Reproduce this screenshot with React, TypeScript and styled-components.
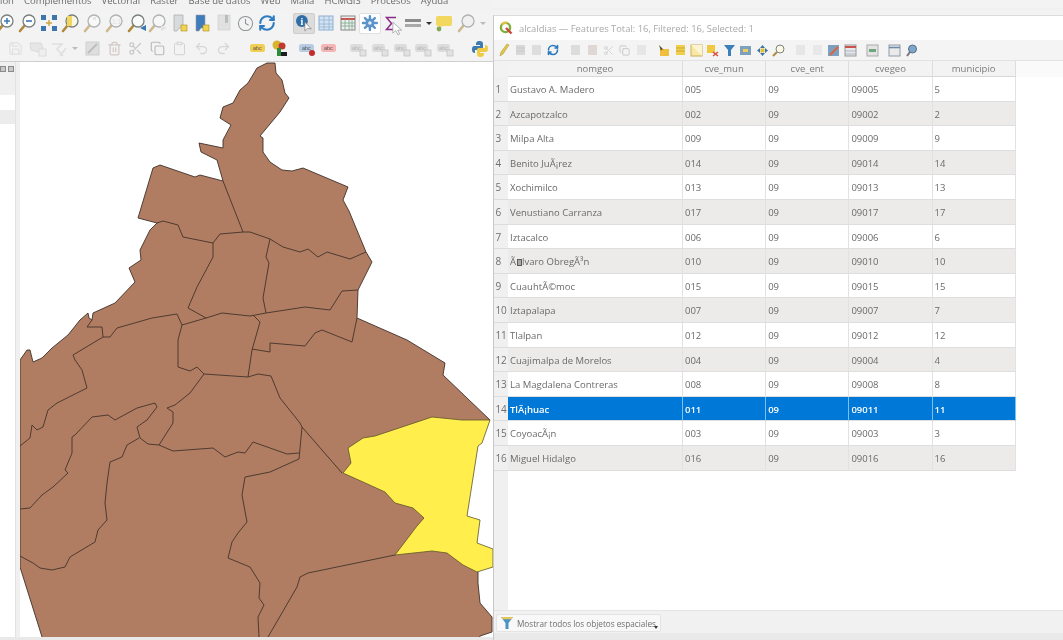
import styled, { createGlobalStyle } from "styled-components";
import { Fragment, ReactNode } from "react";
import {
  Clipboard,
  Clock,
  Copy,
  Redo2,
  RefreshCw,
  Save,
  Scissors,
  Trash2,
  Undo2,
} from "lucide-react";

const GlobalStyle = createGlobalStyle`
  html, body {
    margin: 0;
    padding: 0;
    background: #f2f2f2;
  }
  #root {
    width: 1063px;
    height: 640px;
    overflow: hidden;
  }
`;

// map geometry, in page pixels
const OUTLINE =
  "267,63 275,63 276,73 282,80 285,93 289,98 280,112 260,136 263,138 263,152 270,162 282,170 292,171 303,168 348,187 343,200 349,211 366,252 372,262 358,290 357,318 407,340 445,363 443,375 467,398 490,420 440,440 440,545 470,560 478,572 478,583 480,603 492,617 492,632 480,636 478,640 43,640 20,567 20,360 27,350 30,350 33,362 42,358 52,348 68,335 80,320 88,313 89,318 92,320 93,313 115,303 135,282 129,268 141,260 140,250 150,230 157,223 138,218 153,168 160,165 195,177 200,175 223,181 217,160 201,152 199,143 223,148 223,140 231,125 220,118 223,107 233,103 240,90 248,83 257,68";

const SELECTED =
  "490,420 482,443 478,446 467,516 480,520 477,543 493,549 493,567 477,572 463,565 447,553 432,551 395,555 417,526 424,518 413,508 395,503 385,492 363,482 343,473 351,463 348,448 363,438 375,436 432,417 462,420";

const BORDERS = [
  "223,181 243,232 250,232 270,239 283,247 300,252 308,249 318,257 327,252 350,259 366,252",
  "157,223 163,221 178,225 183,237 213,243 220,234 243,232",
  "213,243 213,257 197,287 188,308 206,318",
  "177,314 182,325 206,318 222,313 250,316 266,313 305,307 330,310 342,291 358,290",
  "270,239 266,257 269,263 263,298 266,313",
  "177,314 152,318 117,328 110,337 103,337 102,327 93,327 87,327 92,320",
  "103,337 73,355 75,360 82,370 87,388 57,403 48,410 43,427 37,430 32,425 30,438 20,446",
  "182,325 178,340 178,367 190,371 197,367 204,374 248,377 258,374 271,376 280,398 300,423 302,427 342,473",
  "204,374 190,393 175,405 167,408 173,412 173,423 159,445",
  "155,403 137,408 115,420 108,415 92,417 75,435 72,437 72,453 65,470 68,473 53,487 42,495 30,508 20,509",
  "155,403 157,407 147,420 137,427 140,438 148,444 159,445 173,451 213,448 225,457 238,452 245,453 253,442 287,454 299,453",
  "139,438 127,445 122,457 110,462 107,483 105,503 107,520 98,530 95,542 70,557 65,567 52,570 40,568 33,563 20,556",
  "302,427 299,459 270,472 245,477 242,495 247,522 238,533 232,542 228,558 250,567 260,583 259,598 264,605 258,617 259,637",
  "395,555 308,573 300,577 297,587 268,637",
  "253,315 260,322 252,350 248,377",
  "252,349 270,352 270,343 305,346 315,333 322,330 352,342 357,318",
];

const MENU = [
  "ión",
  "Complementos",
  "Vectorial",
  "Ráster",
  "Base de datos",
  "Web",
  "Malla",
  "HCMGIS",
  "Procesos",
  "Ayuda",
];

const COLUMNS = ["nomgeo", "cve_mun", "cve_ent", "cvegeo", "municipio"];

const Lens = ({ fill = "#fff", children }: { fill?: string; children?: ReactNode }) => (
  <svg width="20" height="20" viewBox="0 0 20 20">
    <path d="M7 12 L2 18" stroke="#b08a3c" strokeWidth="2.6" strokeLinecap="round" />
    <circle cx="11" cy="8" r="6" fill={fill} stroke="#77807f" strokeWidth="1.3" />
    {children}
  </svg>
);

const Doc = ({ color = "#b9bdc0", dot = "#f3d24c" }: { color?: string; dot?: string }) => (
  <svg width="20" height="20" viewBox="0 0 20 20">
    <path d="M4 2 H13 V15 H9 L7 18 H4 Z" fill={color} stroke="#9aa0a4" strokeWidth=".6" />
    <rect x="11" y="12" width="6" height="6" fill={dot} stroke="#a98f2a" strokeWidth=".6" />
  </svg>
);

const Label = ({ bg, dot }: { bg: string; dot?: string }) => (
  <svg width="20" height="20" viewBox="0 0 20 20">
    <rect x="2" y="5" width="15" height="8" rx="2.5" fill={bg} />
    <text x="5" y="11" fontSize="5.5" fill="#555" fontFamily="Liberation Sans">abc</text>
    {dot && <circle cx="15" cy="14" r="3" fill={dot} />}
  </svg>
);

const GrayLabel = () => (
  <svg width="20" height="20" viewBox="0 0 20 20">
    <rect x="2" y="5" width="13" height="8" rx="2.5" fill="#dcdcdc" />
    <text x="4" y="11" fontSize="5.5" fill="#b5b5b5" fontFamily="Liberation Sans">abc</text>
    <rect x="12" y="11" width="6" height="6" fill="#e2e2e2" stroke="#c4c4c4" strokeWidth=".8" />
  </svg>
);

const MAIN_TOP: ReactNode[] = [
  <Lens><path d="M8 8h6M11 5v6" stroke="#3a78b5" strokeWidth="1.5" /></Lens>,
  <Lens><path d="M8 8h6" stroke="#3a78b5" strokeWidth="1.6" /></Lens>,
  <svg width="20" height="20" viewBox="0 0 20 20">
    <rect x="2" y="2" width="5" height="5" fill="#3d76ad" />
    <rect x="13" y="2" width="5" height="5" fill="#3d76ad" />
    <rect x="2" y="13" width="5" height="5" fill="#3d76ad" />
    <rect x="13" y="13" width="5" height="5" fill="#3d76ad" />
    <path d="M7 10h6M10 7v6" stroke="#c9a53d" strokeWidth="1.4" />
  </svg>,
  <Lens fill="#fbf7e4"><rect x="6" y="3" width="5" height="10" fill="#f1d75c" /></Lens>,
  <Lens fill="#fdfdfd"><rect x="10" y="4" width="3" height="3" fill="#ddd" /></Lens>,
  <Lens fill="#f7f7f7"><text x="7" y="11" fontSize="7" fill="#ccc" fontFamily="Liberation Sans">1:1</text></Lens>,
  <Lens fill="#fafafa"><path d="M19 12 L13 15 L19 18 Z" fill="#3b77b0" /></Lens>,
  <Lens fill="#fbfbfb"><path d="M13 12 L19 15 L13 18 Z" fill="#d5d5d5" /></Lens>,
  <Doc color="#d9dadb" />,
  <Doc color="#3f7cbc" />,
  <svg width="20" height="20" viewBox="0 0 20 20">
    <path d="M4 2 H16 V17 H4 Z" fill="#d3d4d5" stroke="#aeb0b2" strokeWidth=".6" />
    <rect x="11" y="2" width="3" height="8" fill="#8d9194" />
  </svg>,
  <Clock size={17} color="#8f9396" strokeWidth={1.5} />,
  <RefreshCw size={18} color="#2d7cc2" strokeWidth={2.8} />,
];

const MAIN_ANALYSIS: ReactNode[] = [
  <svg width="20" height="20" viewBox="0 0 20 20">
    <circle cx="8" cy="8" r="6" fill="#2f6ea7" />
    <text x="6.5" y="12" fontSize="10" fontWeight="700" fill="#fff" fontFamily="Liberation Serif">i</text>
    <path d="M11 9 L11 18 L13.5 15.5 L17.5 16 Z" fill="#fff" stroke="#777" strokeWidth=".7" />
  </svg>,
  <svg width="18" height="18" viewBox="0 0 18 18">
    <rect x="2" y="2" width="14" height="14" fill="#d4e3f1" stroke="#8eb0cf" />
    <path d="M2 6h14M2 10h14M2 13h14M7 2v14M12 2v14" stroke="#93b5d4" strokeWidth=".8" />
  </svg>,
  <svg width="18" height="18" viewBox="0 0 18 18">
    <rect x="2" y="2" width="14" height="14" fill="#eeeeee" stroke="#888" />
    <path d="M2 5h14" stroke="#c9534e" strokeWidth="2" />
    <path d="M2 9h14M2 12h14M6 5v11M10 5v11M13 5v11" stroke="#7aa98c" strokeWidth=".8" />
  </svg>,
  <svg width="20" height="20" viewBox="0 0 20 20">
    <g stroke="#5b93c9" strokeWidth="2.4" strokeLinecap="round">
      <path d="M10 3v14M3 10h14M5 5l10 10M15 5L5 15" />
    </g>
    <circle cx="10" cy="10" r="4.5" fill="#5b93c9" />
    <circle cx="10" cy="10" r="1.8" fill="#e3edf6" />
  </svg>,
  <svg width="14" height="17" viewBox="0 0 14 17">
    <path d="M12 2.5 H2.5 L7.5 8.5 L2.5 14.5 H12" fill="none" stroke="#8d2a8d" strokeWidth="1.5" />
  </svg>,
  <svg width="18" height="18" viewBox="0 0 18 18">
    <rect x="1" y="5" width="16" height="3" fill="#8b8b8b" />
    <rect x="1" y="10" width="16" height="3" fill="#a9a9a9" />
  </svg>,
];

const MAIN_BOTTOM_LEFT: ReactNode[] = [
  <Save size={15} color="#d2d2d2" strokeWidth={2} />,
  <svg width="20" height="20" viewBox="0 0 20 20">
    <path d="M2 4 H13 L15 9 L10 13 L3 11 Z" fill="#dcdcdc" stroke="#c4c4c4" />
    <rect x="11" y="10" width="7" height="7" fill="#ececec" stroke="#c8c8c8" />
  </svg>,
  <svg width="18" height="18" viewBox="0 0 18 18">
    <path d="M2 4 H12 L7 9 L13 16 M10 16 L16 8" fill="none" stroke="#cfcfcf" strokeWidth="1.6" />
  </svg>,
];

const MAIN_BOTTOM_MID: ReactNode[] = [
  <svg width="17" height="17" viewBox="0 0 17 17">
    <rect x="2" y="2" width="13" height="13" fill="#dedede" stroke="#cfcfcf" />
    <path d="M4 13 L13 4" stroke="#bdbdbd" strokeWidth="2" />
  </svg>,
  <Trash2 size={15} color="#d3c9c4" strokeWidth={2} />,
  <Scissors size={15} color="#c9c9c9" strokeWidth={2} />,
  <Copy size={15} color="#b9b9b9" strokeWidth={1.8} />,
  <Clipboard size={15} color="#d2d2d2" strokeWidth={1.6} />,
  <Undo2 size={15} color="#d6d6d6" strokeWidth={2.2} />,
  <Redo2 size={15} color="#d6d6d6" strokeWidth={2.2} />,
];

const TinyIcon = ({ color, line }: { color: string; line?: string }) => (
  <svg width="11" height="12" viewBox="0 0 11 12">
    <rect x="1" y="1" width="9" height="10" fill={color} />
    {line && <path d="M1 4h9M1 7h9" stroke={line} strokeWidth="1" />}
  </svg>
);

const TABLE_TOOLS: (ReactNode | "sep")[] = [
  <svg width="12" height="14" viewBox="0 0 12 14"><path d="M2 13 L3 9 L9 1 L11 2 L5 11 Z" fill="#e4c744" stroke="#a68f2f" strokeWidth=".5" /></svg>,
  <TinyIcon color="#d8d8d8" line="#cacaca" />,
  <TinyIcon color="#dddddd" />,
  <RefreshCw size={12} color="#2b78bd" strokeWidth={3.2} />,
  "sep",
  <TinyIcon color="#dcdcdc" />,
  <TinyIcon color="#dfd7d3" />,
  <Scissors size={11} color="#d0d0d0" strokeWidth={2} />,
  <Copy size={11} color="#c6c6c6" strokeWidth={2} />,
  <TinyIcon color="#e6e6e6" />,
  "sep",
  <svg width="13" height="13" viewBox="0 0 13 13"><rect x="3" y="5" width="9" height="7" fill="#f0bf3c" /><path d="M2 1 L4 7 L5 5 L7 6 Z" fill="#5b4a22" /></svg>,
  <TinyIcon color="#f2cf4a" line="#c9a739" />,
  <svg width="13" height="13" viewBox="0 0 13 13"><rect x="1" y="1" width="11" height="11" fill="#f9e7a4" stroke="#c9b05a" /><path d="M1 1 L12 12 L12 1 Z" fill="#fdf5d2" /></svg>,
  <svg width="13" height="13" viewBox="0 0 13 13"><rect x="1" y="1" width="8" height="8" fill="#f1c93f" /><path d="M7 8 L12 12 M12 8 L7 12" stroke="#d9503f" strokeWidth="1.6" /></svg>,
  <svg width="13" height="13" viewBox="0 0 13 13"><path d="M1 1 H12 L8 6 V12 L5 12 V6 Z" fill="#3d7fb8" /></svg>,
  <svg width="13" height="13" viewBox="0 0 13 13"><rect x="1" y="2" width="11" height="9" fill="#7ea0bf" /><rect x="4" y="5" width="5" height="3" fill="#efcf58" /></svg>,
  <svg width="13" height="13" viewBox="0 0 13 13"><path d="M6.5 1 L9 4 H4 Z M6.5 12 L4 9 H9 Z M1 6.5 L4 4 V9 Z M12 6.5 L9 4 V9 Z" fill="#3d74a8" /><rect x="4.5" y="4.5" width="4" height="4" fill="#e3bf3e" /></svg>,
  <svg width="13" height="13" viewBox="0 0 13 13"><path d="M5 8 L1 12" stroke="#b08a3c" strokeWidth="2" /><circle cx="8" cy="5" r="4" fill="#fdf8e2" stroke="#7c8384" /></svg>,
  "sep",
  <TinyIcon color="#e6e6e6" />,
  <TinyIcon color="#e8e8e8" />,
  <svg width="13" height="13" viewBox="0 0 13 13"><rect x="1" y="1" width="11" height="11" fill="#7f9fc0" /><path d="M3 11 L11 3" stroke="#d8663f" strokeWidth="2" /></svg>,
  <svg width="13" height="13" viewBox="0 0 13 13"><rect x="1" y="1" width="11" height="11" fill="#e8e8e8" stroke="#999" /><path d="M1 3h11" stroke="#c9534e" strokeWidth="2" /><path d="M1 7h11M1 10h11" stroke="#9ab" strokeWidth=".8" /></svg>,
  "sep",
  <svg width="13" height="13" viewBox="0 0 13 13"><rect x="1" y="1" width="11" height="11" fill="#e4e4e4" stroke="#aaa" /><rect x="3" y="5" width="7" height="3" fill="#6fa67f" /></svg>,
  "sep",
  <svg width="13" height="13" viewBox="0 0 13 13"><rect x="1" y="1" width="11" height="11" fill="#eaeaea" stroke="#8c9aa8" /><path d="M1 3.5h11" stroke="#6e8aa6" strokeWidth="1.6" /></svg>,
  <svg width="13" height="13" viewBox="0 0 13 13"><path d="M5 8 L2 12" stroke="#777" strokeWidth="2" /><circle cx="7.5" cy="5" r="4" fill="#7ea6cc" stroke="#5a6f84" /></svg>,
];

const QLogo = () => (
  <svg width="14" height="14" viewBox="0 0 14 14">
    <circle cx="6.5" cy="6.5" r="4.6" fill="none" stroke="#7fae3d" strokeWidth="2.4" />
    <path d="M3 3.5 A4.6 4.6 0 0 1 8 2" fill="none" stroke="#e4c13c" strokeWidth="2.4" />
    <path d="M7 7 L12.5 12.5" stroke="#c9473a" strokeWidth="2.4" />
  </svg>
);

const Cursor = () => (
  <CursorMark width="11" height="15" viewBox="0 0 13 17">
    <path d="M1 1 V14 L4.5 11 L7 16 L9 15 L6.8 10.5 H11.5 Z" fill="#fff" stroke="#9a9a9a" strokeWidth=".9" />
  </CursorMark>
);

export default function App() {
  const rows: ReactNode[][] = [
    ["Gustavo A. Madero", "005", "09", "09005", "5"],
    ["Azcapotzalco", "002", "09", "09002", "2"],
    ["Milpa Alta", "009", "09", "09009", "9"],
    ["Benito Ju\u00C3\u00A1rez", "014", "09", "09014", "14"],
    ["Xochimilco", "013", "09", "09013", "13"],
    ["Venustiano Carranza", "017", "09", "09017", "17"],
    ["Iztacalco", "006", "09", "09006", "6"],
    [<>{"\u00C3"}<ControlChar />{"lvaro Obreg\u00C3\u00B3n"}</>, "010", "09", "09010", "10"],
    ["Cuauht\u00C3\u00A9moc", "015", "09", "09015", "15"],
    ["Iztapalapa", "007", "09", "09007", "7"],
    ["Tlalpan", "012", "09", "09012", "12"],
    ["Cuajimalpa de Morelos", "004", "09", "09004", "4"],
    ["La Magdalena Contreras", "008", "09", "09008", "8"],
    ["Tl\u00C3\u00A1huac", "011", "09", "09011", "11"],
    ["Coyoac\u00C3\u00A1n", "003", "09", "09003", "3"],
    ["Miguel Hidalgo", "016", "09", "09016", "16"],
  ];

  return (
    <>
      <GlobalStyle />
      <Page>
        <MainColumn>
          <MenuBar>
            {MENU.map((item) => (
              <MenuItem key={item}>{item}</MenuItem>
            ))}
          </MenuBar>

          <TopToolbar>
            {MAIN_TOP.map((icon, i) => (
              <Tool key={i} $faded={i === 4 || i === 5 || i === 7 || i === 10}>
                {icon}
              </Tool>
            ))}
            <ToolGap $w={15} />
            <ActiveTool>{MAIN_ANALYSIS[0]}</ActiveTool>
            <Tool>{MAIN_ANALYSIS[1]}</Tool>
            <Tool>{MAIN_ANALYSIS[2]}</Tool>
            <PressedTool>{MAIN_ANALYSIS[3]}</PressedTool>
            <Tool>
              {MAIN_ANALYSIS[4]}
              <Cursor />
            </Tool>
            <Tool>{MAIN_ANALYSIS[5]}</Tool>
            <Caret />
            <Balloon width="18" height="17" viewBox="0 0 18 17">
              <path d="M3 1 H16 Q17 1 17 3 V9 Q17 11 15 11 H8 L4 13 V11 Q1 11 1 9 V3 Q1 1 3 1 Z" fill="#f3d860" />
              <circle cx="4" cy="14" r="2.4" fill="#86a85a" />
            </Balloon>
            <ToolGap $w={3} />
            <Tool $faded>
              <Lens fill="#eee" />
            </Tool>
            <Caret $faded />
          </TopToolbar>

          <BottomToolbar>
            <Tool $faded>{MAIN_BOTTOM_LEFT[0]}</Tool>
            <Tool $faded>{MAIN_BOTTOM_LEFT[1]}</Tool>
            <Tool $faded>{MAIN_BOTTOM_LEFT[2]}</Tool>
            <Caret $faded />
            {MAIN_BOTTOM_MID.map((icon, i) => (
              <Tool key={i}>{icon}</Tool>
            ))}
            <ToolGap $w={13} />
            <Tool><Label bg="#f0cf52" /></Tool>
            <Tool>
              <svg width="20" height="20" viewBox="0 0 20 20">
                <circle cx="7" cy="6" r="4.5" fill="#d9b42f" />
                <circle cx="12" cy="7" r="3.5" fill="#c3382f" />
                <rect x="7" y="9" width="4" height="8" fill="#2f8c3e" />
                <rect x="11" y="13" width="6" height="4" fill="#1d1d1d" />
              </svg>
            </Tool>
            <ToolGap $w={6} />
            <Tool><Label bg="#b7cce3" dot="#c22c2c" /></Tool>
            <Tool><Label bg="#f5b5b5" /></Tool>
            <ToolGap $w={7} />
            <Tool><GrayLabel /></Tool>
            <Tool><GrayLabel /></Tool>
            <Tool><GrayLabel /></Tool>
            <Tool><GrayLabel /></Tool>
            <Tool><GrayLabel /></Tool>
            <ToolGap $w={13} />
            <Tool>
              <svg width="18" height="18" viewBox="0 0 18 18">
                <path d="M9 1 C5 1 5 3 5 5 H9 V6 H3 C1 6 1 9 1 10 C1 12 2 13 4 13 V10 H10 C12 10 12 9 12 7 V4 C12 2 11 1 9 1 Z" fill="#3f7bb0" />
                <path d="M9 17 C13 17 13 15 13 13 H9 V12 H15 C17 12 17 9 17 8 C17 6 16 5 14 5 V8 H8 C6 8 6 9 6 11 V14 C6 16 7 17 9 17 Z" fill="#f0cb45" />
              </svg>
            </Tool>
          </BottomToolbar>

          <Workspace>
            <Dock>
              <DockHead>
                <DockButton />
                <DockButton />
              </DockHead>
              <DockGap />
              <DockRow />
              <DockRow $active />
              <DockRest />
            </Dock>
            <Splitter />
            <MapCanvas viewBox="20 62 473 575">
              <polygon
                points={OUTLINE}
                fill="#b07d62"
                stroke="#3f3029"
                strokeWidth="0.9"
                strokeLinejoin="round"
              />
              {BORDERS.map((points) => (
                <polyline
                  key={points}
                  points={points}
                  fill="none"
                  stroke="#4a372d"
                  strokeWidth="0.95"
                  strokeLinejoin="round"
                />
              ))}
              <polygon
                points={SELECTED}
                fill="#ffee4c"
                stroke="#5d5529"
                strokeWidth="0.8"
                strokeLinejoin="round"
              />
            </MapCanvas>
          </Workspace>
          <BottomEdge $h={3} />
        </MainColumn>

        <TableColumn>
          <TopStrip />
          <Window>
            <TitleBar>
              <QLogo />
              <TitleText>alcaldias — Features Total: 16, Filtered: 16, Selected: 1</TitleText>
            </TitleBar>

            <TableToolbar>
              {TABLE_TOOLS.map((tool, i) => (
                <Fragment key={i}>
                  {tool === "sep" ? <TableSep /> : <TableTool>{tool}</TableTool>}
                </Fragment>
              ))}
            </TableToolbar>

            <TableArea>
              <HeadRow>
                <Corner />
                {COLUMNS.map((col, i) => (
                  <HeadCell key={col} $first={i === 0}>
                    {col}
                  </HeadCell>
                ))}
              </HeadRow>

              {rows.map((row, r) => (
                <Row key={r}>
                  <RowNumber>{r + 1}</RowNumber>
                  {row.map((value, c) => (
                    <Cell key={c} $first={c === 0} $alt={r % 2 === 1} $selected={r === 13}>
                      {value}
                    </Cell>
                  ))}
                </Row>
              ))}

              <EmptyArea>
                <EmptyGutter />
              </EmptyArea>
            </TableArea>

            <FilterBar>
              <FilterButton>
                <svg width="14" height="14" viewBox="0 0 14 14">
                  <path d="M1 1 H13 L8.5 7 V13 H5.5 V7 Z" fill="#4a93c4" />
                  <path d="M1 1 H13 L11.5 3.2 H2.5 Z" fill="#e4c659" />
                </svg>
                <FilterText>Mostrar todos los objetos espaciales</FilterText>
                <FilterArrow />
              </FilterButton>
            </FilterBar>
            <BottomEdge $h={7} />
          </Window>
        </TableColumn>
      </Page>
    </>
  );
}

const Page = styled.div`
  display: flex;
  width: 1063px;
  height: 640px;
  overflow: hidden;
  background: #f2f2f2;
  font-family: "Open Sans", "Noto Sans", sans-serif;
  filter: blur(0.5px);
`;

const MainColumn = styled.div`
  width: 493px;
  flex: none;
  display: flex;
  flex-direction: column;
`;

const MenuBar = styled.div`
  height: 10px;
  flex: none;
  overflow: hidden;
  display: flex;
  gap: 10px;
  align-items: flex-end;
  font-size: 9.5px;
  line-height: 14px;
  color: #6b6b6b;
`;

const MenuItem = styled.span`
  flex: none;
  margin-bottom: 2px;
`;

const TopToolbar = styled.div`
  height: 26px;
  flex: none;
  display: flex;
  align-items: center;
  margin-left: -5px;
  background: #f3f3f3;
`;

const BottomToolbar = styled.div`
  height: 25px;
  flex: none;
  display: flex;
  align-items: center;
  padding-left: 5px;
  background: #f3f3f3;
  border-bottom: 1px solid #cfcfcf;
`;

const Tool = styled.div<{ $faded?: boolean }>`
  position: relative;
  width: 21.8px;
  height: 21px;
  flex: none;
  display: flex;
  align-items: center;
  justify-content: center;
  opacity: ${({ $faded }) => ($faded ? 0.55 : 1)};
`;

const ActiveTool = styled(Tool)`
  background: #dcdcdc;
  border-radius: 2px;
  border: 1px solid #cdcdcd;
  box-sizing: border-box;
`;

const PressedTool = styled(Tool)`
  background: #fff;
  border: 1px solid #e0e0e0;
  box-sizing: border-box;
  border-radius: 2px;
`;

const ToolGap = styled.div<{ $w: number }>`
  width: ${({ $w }) => $w}px;
  flex: none;
`;

const CursorMark = styled.svg`
  position: absolute;
  left: 11px;
  top: 8px;
`;

const Caret = styled.div<{ $faded?: boolean }>`
  width: 0;
  height: 0;
  flex: none;
  margin: 0 3px 0 2px;
  border-left: 3px solid transparent;
  border-right: 3px solid transparent;
  border-top: 3px solid ${({ $faded }) => ($faded ? "#bbb" : "#333")};
`;

const Balloon = styled.svg`
  flex: none;
`;

const Workspace = styled.div`
  flex: 1;
  min-height: 0;
  display: flex;
`;

const Dock = styled.div`
  width: 15px;
  flex: none;
  display: flex;
  flex-direction: column;
  background: #f0f0f0;
`;

const DockHead = styled.div`
  height: 13px;
  flex: none;
  display: flex;
  gap: 2px;
  align-items: center;
`;

const DockButton = styled.div`
  width: 6px;
  height: 6px;
  flex: none;
  background: #c9c9c9;
  border: 1px solid #8a8a8a;
  box-sizing: border-box;
`;

const DockGap = styled.div`
  height: 20px;
  flex: none;
`;

const DockRow = styled.div<{ $active?: boolean }>`
  height: 14.5px;
  flex: none;
  background: ${({ $active }) => ($active ? "#ececec" : "#fff")};
`;

const DockRest = styled.div`
  flex: 1;
  background: #fff;
`;

const Splitter = styled.div`
  width: 5px;
  flex: none;
  background: #f0f0f0;
  border-left: 1px solid #e2e2e2;
  box-sizing: border-box;
`;

const MapCanvas = styled.svg`
  width: 473px;
  height: 575px;
  display: block;
  flex: none;
  background: #fff;
`;

const BottomEdge = styled.div<{ $h: number }>`
  height: ${({ $h }) => $h}px;
  flex: none;
  background: #e9e9e9;
`;

const TableColumn = styled.div`
  flex: 1;
  min-width: 0;
  display: flex;
  flex-direction: column;
`;

const TopStrip = styled.div`
  height: 15px;
  flex: none;
  background: linear-gradient(#f3f3f3 8px, #ececec 9px, #f3f3f3 10px);
`;

const Window = styled.div`
  flex: 1;
  min-height: 0;
  display: flex;
  flex-direction: column;
  border-left: 1px solid #c8c8c8;
  border-top: 1px solid #dcdcdc;
  background: #f3f3f3;
`;

const TitleBar = styled.div`
  height: 24px;
  flex: none;
  display: flex;
  align-items: center;
  gap: 6px;
  padding-left: 5px;
  background: #fff;
`;

const TitleText = styled.span`
  font-size: 9.4px;
  color: #a9a9a9;
  white-space: nowrap;
`;

const TableToolbar = styled.div`
  height: 20px;
  flex: none;
  display: flex;
  align-items: center;
  padding-left: 2px;
  background: #f4f4f4;
`;

const TableTool = styled.div`
  width: 16.4px;
  height: 16px;
  flex: none;
  display: flex;
  align-items: center;
  justify-content: center;
`;

const TableSep = styled.div`
  width: 6px;
  flex: none;
`;

const TableArea = styled.div`
  flex: 1;
  min-height: 0;
  display: flex;
  flex-direction: column;
  background: #fff;
  border-top: 1px solid #e2e2e2;
`;

const HeadRow = styled.div`
  height: 16px;
  flex: none;
  display: flex;
  background: #fafafa;
`;

const Corner = styled.div`
  width: 14px;
  flex: none;
  background: #f2f2f2;
`;

const HeadCell = styled.div<{ $first?: boolean }>`
  width: ${({ $first }) => ($first ? 175 : 83.2)}px;
  flex: none;
  box-sizing: border-box;
  background: #f3f3f3;
  border-right: 1px solid #dddddd;
  border-bottom: 1px solid #d8d8d8;
  text-align: center;
  font-size: 9.5px;
  line-height: 15px;
  color: #7b7b7b;
`;

const Row = styled.div`
  height: 24.6px;
  flex: none;
  display: flex;
`;

const RowNumber = styled.div`
  width: 14px;
  flex: none;
  box-sizing: border-box;
  background: #f0f0f0;
  border-bottom: 1px solid #dcdcdc;
  padding-left: 1.5px;
  font-size: 10px;
  line-height: 25.5px;
  color: #6f6f6f;
  letter-spacing: -0.2px;
  overflow: hidden;
`;

const Cell = styled.div<{ $first?: boolean; $alt?: boolean; $selected?: boolean }>`
  width: ${({ $first }) => ($first ? 175 : 83.2)}px;
  flex: none;
  box-sizing: border-box;
  padding-left: 2px;
  border-right: 1px solid ${({ $selected }) => ($selected ? "#7cc0ee" : "#e2e2e2")};
  border-bottom: 1px solid #dedede;
  background: ${({ $alt, $selected }) =>
    $selected ? "#0078d7" : $alt ? "#ecebe9" : "#fff"};
  color: ${({ $selected }) => ($selected ? "#fff" : "#6a6a6a")};
  font-size: 9.5px;
  font-weight: ${({ $selected }) => ($selected ? 600 : 400)};
  line-height: 25.5px;
  white-space: nowrap;
  overflow: hidden;
`;

const ControlChar = styled.span`
  display: inline-block;
  width: 5px;
  height: 7px;
  margin: 0 0.5px;
  border: 1px solid #5a5a5a;
  background: #a8a8a8;
  box-sizing: border-box;
  vertical-align: -0.5px;
`;

const EmptyArea = styled.div`
  flex: 1;
  min-height: 0;
  display: flex;
  background: #fff;
`;

const EmptyGutter = styled.div`
  width: 14px;
  background: #f0f0f0;
`;

const FilterBar = styled.div`
  height: 23px;
  flex: none;
  box-sizing: border-box;
  padding: 3px 0 2px 2px;
  display: flex;
  background: #f1f1f1;
  border-top: 1px solid #e4e4e4;
`;

const FilterButton = styled.div`
  position: relative;
  width: 165px;
  height: 18px;
  box-sizing: border-box;
  display: flex;
  align-items: center;
  gap: 3px;
  padding-left: 3px;
  background: #f8f8f8;
  border: 1px solid #e4e4e4;
  border-radius: 2px;
`;

const FilterText = styled.span`
  font-size: 8.2px;
  color: #6f6f6f;
  white-space: nowrap;
`;

const FilterArrow = styled.div`
  position: absolute;
  right: 2px;
  bottom: 2px;
  width: 0;
  height: 0;
  border-left: 2.5px solid transparent;
  border-right: 2.5px solid transparent;
  border-top: 3px solid #333;
`;
